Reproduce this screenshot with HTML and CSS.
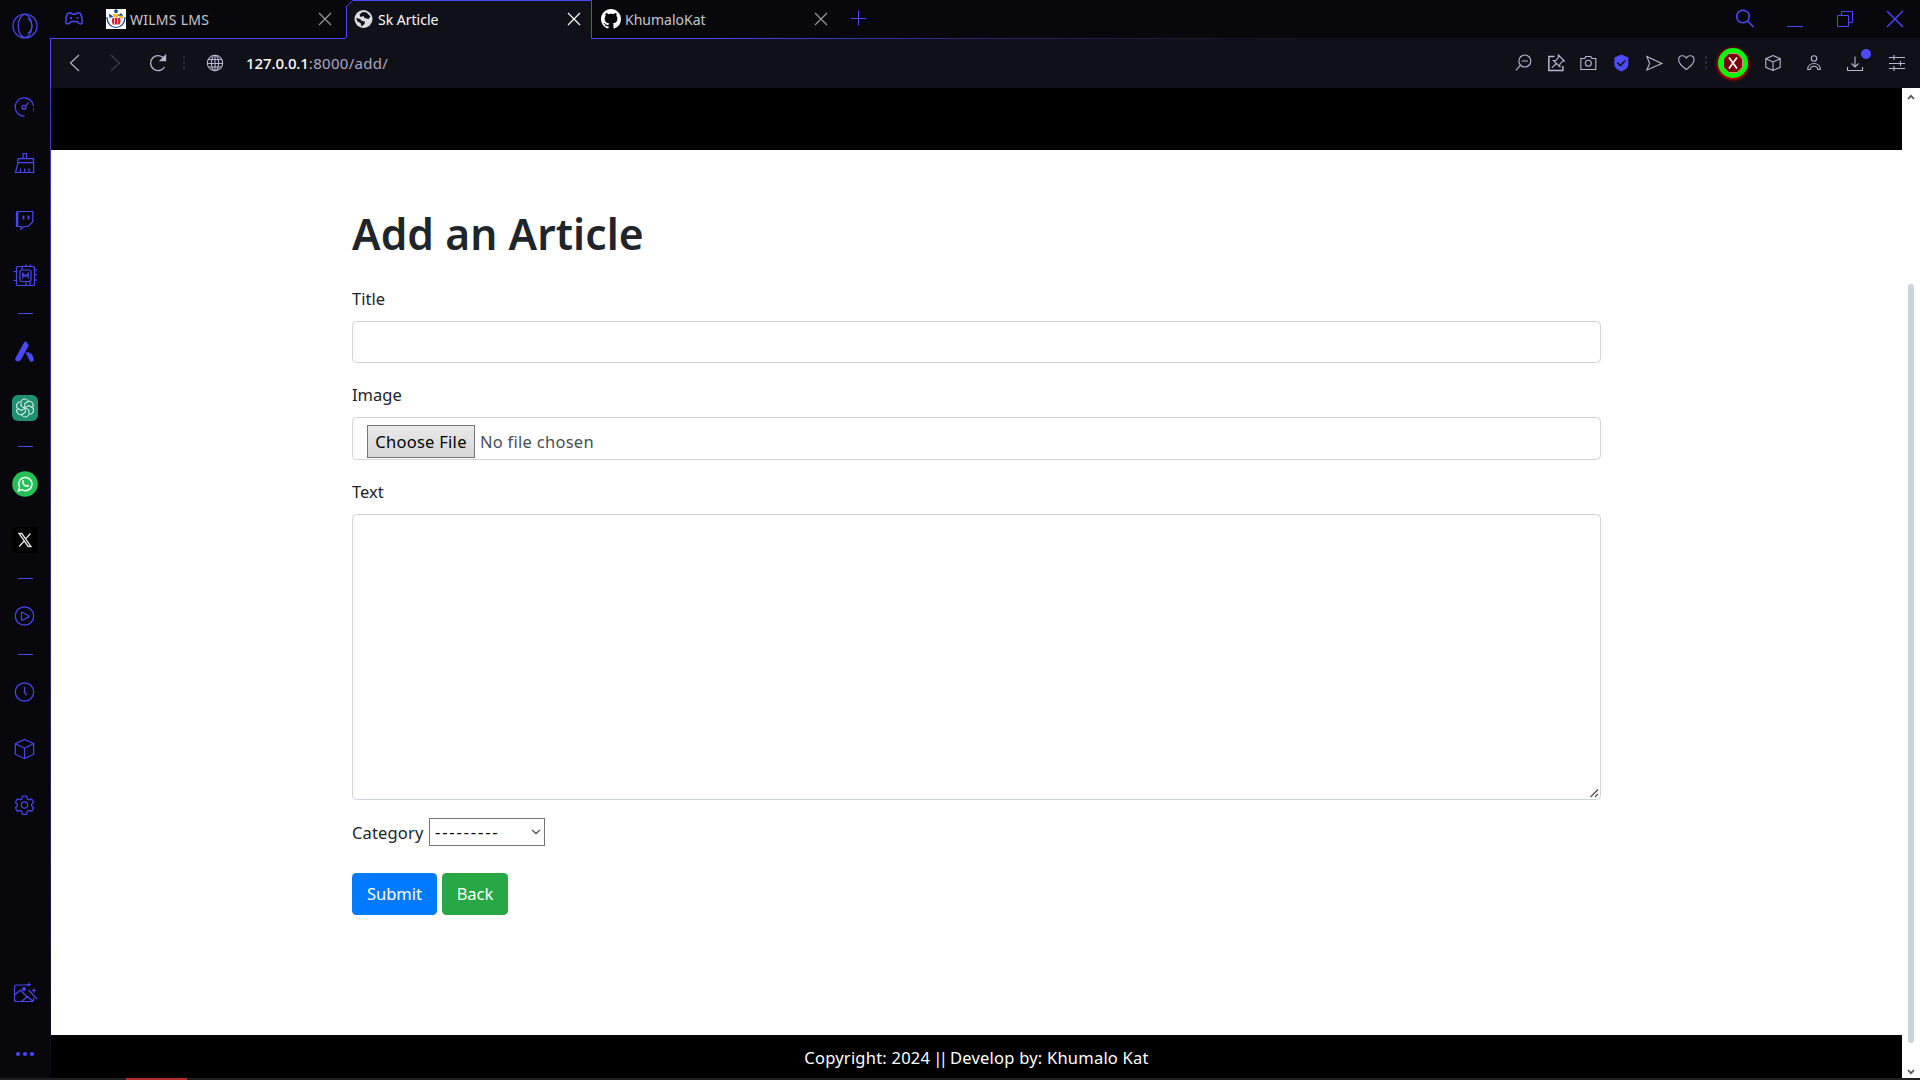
FILE: index.html
```html
<!DOCTYPE html>
<html lang="en">
<head>
<meta charset="utf-8">
<title>Sk Article</title>
<link rel="stylesheet" href="styles.css">
</head>
<body>
<div class="browser">
  <aside class="sidebar">
    <svg class="ico opera" viewBox="0 0 26 26"><circle cx="13" cy="13" r="12"/><ellipse cx="13" cy="13" rx="6.8" ry="11.5"/><path d="M15.5 5.8c6 2.500 6 12 0 14.400"/></svg>
    <svg class="ico speed" viewBox="0 0 26 26"><path d="M12.500 22.200A9.200 9.200 0 1 1 21.500 12"/><path d="M21.500 14v4" stroke-dasharray="1.200 1.200"/><circle cx="12" cy="13.300" r="2"/><path d="m13.500 11.800 3.200-3.200"/></svg>
    <svg class="ico" viewBox="0 0 26 26"><path d="M11 9V3.500h3.500V9M6 8.700h15.500v4H6zM6 12.700 3.500 22.500h18.200v-9.800M8 22.500l.8-4M12.700 22.500v-4M17 22.500v-4"/></svg>
    <svg class="ico" viewBox="0 0 26 26"><path d="M5 4.500h15.800v10.300L16 19.500h-4l-3 2.700v-2.700H4.500V6z"/><path d="M5.200 5v14" stroke-width="2.200"/><path d="M11.500 8.500v4M16.500 8.500v4" stroke-width="1.800"/></svg>
    <svg class="ico chip" viewBox="0 0 26 26"><rect x="4.500" y="3.500" width="18" height="19" rx="1"/><rect x="8" y="7" width="11" height="11.500" rx="2"/><path d="M10.800 15.500v-5l2.700 3 2.700-3v5" stroke-width="1.300"/><path d="M10 3.500V7M14 1.500v2M18.500 1.500v2M14 18.500v4M18 18.500v4M22.500 7h2.500M22.500 12h2.500M22.500 17h2.500M1.500 8.500h3M1.500 17.500h3"/></svg>
    <span class="dash after-chip"></span>
    <svg class="ico solid" viewBox="0 0 26 26"><path d="M12 3.500c1-1.300 2.300-1.200 3 0l1.700 3.300L9 20.800c-1.300 2-3.300 2-4.700 1.200-1.300-.7-1.500-1.600-.9-2.800zM13.500 13.500c5-1 7.500 2 8.300 7.300.2 1.600-1.600 2-3.500 1.900z"/></svg>
    <svg class="ico gpt" viewBox="0 0 26 26"><rect width="26" height="26" rx="6"/><path d="M12.700 13.200 9 11V7.500c0-4 6-4.700 7.300-1.300"/><path d="M12.700 13.200 9 11V7.500c0-4 6-4.700 7.300-1.300" transform="rotate(60 13 13)"/><path d="M12.700 13.200 9 11V7.500c0-4 6-4.700 7.300-1.300" transform="rotate(120 13 13)"/><path d="M12.700 13.200 9 11V7.500c0-4 6-4.700 7.300-1.300" transform="rotate(180 13 13)"/><path d="M12.700 13.200 9 11V7.500c0-4 6-4.700 7.300-1.300" transform="rotate(240 13 13)"/><path d="M12.700 13.200 9 11V7.500c0-4 6-4.700 7.300-1.300" transform="rotate(300 13 13)"/></svg>
    <span class="dash"></span>
    <svg class="ico whatsapp" viewBox="0 0 26 26"><circle class="disc" cx="13" cy="13" r="12.800"/><path d="m6.500 19.800 1-3.700a6.600 6.600 0 1 1 2.500 2.600z"/><path class="phone" d="M10.500 9.200c1-.6 1.300.2 1.700 1.600l-.7 1c.6 1.300 1.500 2 2.800 2.600l1-1c1.700.6 2.200.9 1.400 2-2.300 2.500-8.300-2.300-6.200-6.200z"/></svg>
    <svg class="ico xlogo" viewBox="0 0 26 26"><rect width="26" height="26" rx="5"/><path d="M7 6.500h2.800l9.200 13h-2.800zM18.500 6.500l-4.800 5.400M12 14.200l-4.800 5.300"/></svg>
    <span class="dash"></span>
    <svg class="ico" viewBox="0 0 26 26"><circle cx="12.500" cy="13" r="9.200"/><path d="M9.500 9.500v7.300l1 .3 6.500-3.300v-.8l-6.500-3.700z"/></svg>
    <span class="dash"></span>
    <svg class="ico" viewBox="0 0 26 26"><circle cx="12.500" cy="13" r="9.200"/><path d="M12.500 8v5.500l2.500 2.700"/></svg>
    <svg class="ico" viewBox="0 0 26 26"><path d="m12.500 3.500 9.200 4.200v10.500l-9.200 4.500-9.200-4.500V7.700zM3.300 7.700l9.200 4.500 9.200-4.500M12.500 12.200v10.500"/></svg>
    <svg class="ico" viewBox="0 0 26 26"><circle cx="12.500" cy="13" r="3.200"/><path d="M10.500 4h4l.8 2.800 1.700 1 2.700-.8 1.900 3.300-2 2v1.600l2 2-1.900 3.300-2.700-.8-1.700 1-.8 2.900h-4l-.8-2.900-1.700-1-2.700.8-1.900-3.300 2-2v-1.600l-2-2L5.300 7l2.700.8 1.700-1z"/></svg>
    <svg class="ico picture" viewBox="0 0 26 26"><path d="M16 5H4.500a2 2 0 0 0-2 2v12.500a2 2 0 0 0 2 2h15a2 2 0 0 0 2-2V18M2.500 15l6-5 7.500 8M10 21l5.500-4.500L20.500 21M16.500 10l8.500 9M15 4.500h4M17 2.500v4M20 10.500h4M22 8.500v4"/><circle cx="12" cy="9" r="1.300" fill="#4a48f5"/></svg>
    <svg class="ico solid more" viewBox="0 0 26 26"><circle cx="6" cy="13" r="2.100"/><circle cx="13" cy="13" r="2.100"/><circle cx="20" cy="13" r="2.100"/></svg>
  </aside>

  <div class="window">
    <header class="tabstrip">
      <svg class="gx" viewBox="0 0 20 16"><path d="M5 2h2l1.200 1.200h3.600L13 2h2c2 0 2.400 2 3 6 .5 3.500.3 5-1.500 5-1.300 0-2-.7-3.500-2.500H7C5.500 12.300 4.800 13 3.500 13 1.700 13 1.500 11.500 2 8c.6-4 1-6 3-6z"/><path d="M7 6v2M6 7h2M12.500 7h2"/></svg>
      <div class="tab first">
        <svg class="fav" viewBox="0 0 20 20"><path fill="#fff" d="M0 0h20v20H0z"/><path fill="none" stroke="#1a4a94" stroke-width="1.200" d="M1 8c0 14 18 14 18 0"/><path fill="#15498d" d="M8 1.500 10 0l2 1.500-.7 2.500H8.700zM3 4.500l4.500 3.300-4 1.200z"/><path fill="#efb730" d="m6.500 4.500 3.500.700 3.500-.700-1.500 4H8zM17 5.500l-5 3 5 1z"/><path fill="#15498d" d="m15 4-3 3 5-.500z"/><path fill="#cf2034" d="M6.500 9h7.500l.7 3-1 3.500h-7l-1-3.500z"/><path stroke="#fff" stroke-width=".7" d="M8.500 9v6.500M11.700 9v6.500"/></svg>
        <span class="tab-title wide">WILMS LMS</span>
        <svg class="x" viewBox="0 0 14 14"><path d="m1 1 12 12M13 1 1 13"/></svg>
      </div>
      <div class="tab active">
        <svg class="outline" viewBox="-1 0 247 39"><path class="face" d="M-1 39 .5 37V6.500L7 .5h238.500V39z"/><path class="edge" d="M-1 38.500.5 37V6.500L7 .5h238.500v38"/></svg>
        <svg class="fav" viewBox="0 0 20 20"><circle cx="9.500" cy="10" r="9" fill="#dedee2"/><path fill="#101018" d="M5.500 5.500 8.500 3l4 .5 4 4-2 2.500-4-1-1-2-3 1zM2 9l4 1 2 2 3 .5-.5 2.500-3 2.500-1-3.500-3-1.500z"/></svg>
        <span class="tab-title">Sk Article</span>
        <svg class="x" viewBox="0 0 14 14"><path d="m1 1 12 12M13 1 1 13"/></svg>
      </div>
      <div class="tab third">
        <svg class="fav" viewBox="0 0 16 16"><path fill="#fff" d="M8 0C3.580 0 0 3.580 0 8c0 3.540 2.290 6.530 5.470 7.590.4.070.550-.170.550-.380 0-.190-.010-.820-.010-1.490-2.010.370-2.530-.490-2.690-.940-.090-.230-.480-.940-.820-1.130-.280-.150-.680-.520-.010-.530.630-.010 1.080.580 1.230.820.720 1.210 1.870.870 2.330.660.070-.520.280-.870.510-1.070-1.780-.200-3.640-.890-3.640-3.950 0-.870.310-1.590.820-2.150-.080-.200-.360-1.020.080-2.120 0 0 .670-.210 2.200.820.640-.180 1.320-.270 2-.270s1.360.090 2 .270c1.530-1.040 2.200-.820 2.200-.820.440 1.100.160 1.920.080 2.120.510.560.820 1.270.820 2.150 0 3.070-1.870 3.750-3.650 3.950.290.250.540.730.540 1.480 0 1.070-.010 1.930-.010 2.200 0 .210.150.460.550.380A8.010 8.010 0 0 0 16 8c0-4.420-3.580-8-8-8z"/></svg>
        <span class="tab-title">KhumaloKat</span>
        <svg class="x" viewBox="0 0 14 14"><path d="m1 1 12 12M13 1 1 13"/></svg>
      </div>
      <svg class="plus" viewBox="0 0 16 16"><path d="M7.500 .500v15M0 8.500h15"/></svg>
      <div class="controls">
        <svg viewBox="0 0 20 20"><circle cx="8" cy="7.500" r="6.300"/><path d="m12.500 12 6 6"/></svg>
        <svg viewBox="0 0 20 20"><path d="M2 17.500h16"/></svg>
        <svg viewBox="0 0 20 20"><path d="M2.500 6.500h11v11h-11zM6.500 6.500v-4h11v11h-4"/></svg>
        <svg viewBox="0 0 20 20"><path d="m2 2 16 16M18 2 2 18" stroke-width="1.400"/></svg>
      </div>
    </header>

    <nav class="toolbar">
      <svg class="tb back" viewBox="0 0 20 20"><path d="m14 2-8.500 8 8.500 8"/></svg>
      <svg class="tb fwd" viewBox="0 0 20 20"><path d="m6 2 8.500 8-8.500 8"/></svg>
      <svg class="tb reload" viewBox="0 0 20 20"><path d="M16.500 14A7.500 7.500 0 1 1 16 5.500" /><path d="M17.500 2.500v5h-5z" fill="#b9b6d3"/></svg>
      <i class="sep"></i>
      <svg class="tb globe" viewBox="0 0 20 20"><circle cx="10" cy="10" r="7.700"/><ellipse cx="10" cy="10" rx="3.600" ry="7.700"/><path d="M10 2.300v15.400M3.500 6.500h13M2.300 10.500h15.400M4 14h12"/></svg>
      <div class="url"><b>127.0.0.1</b><span>:8000/add/</span></div>
      <div class="actions">
        <svg class="tb" viewBox="0 0 20 20"><circle cx="11.500" cy="8" r="6"/><path d="m7 12.300-4.500 5M8.500 8h6"/></svg>
        <svg class="tb" viewBox="0 0 20 20"><path d="M8 3.500H2.500v14h14V13" stroke-width="1.500"/><path d="m12 2 6 6-2 .5-2.500 2.700v2.500L7 7.500h2.500L12 4.500zM10 10.500l-4.500 4.300"/></svg>
        <svg class="tb" viewBox="0 0 20 20"><path d="M2.500 5.500h4l1-2h5l1 2h4v11h-15z"/><circle cx="10" cy="10.300" r="3"/></svg>
        <svg class="tb" viewBox="0 0 20 20"><path d="m10 1.500 7 3v7c0 3.500-3.500 5.500-7 7-3.500-1.500-7-3.500-7-7v-7z" fill="#4d4bff" stroke="none"/><path d="m6 9.500 3 3L14 7.500" stroke="#101018" stroke-width="1.600"/></svg>
        <svg class="tb" viewBox="0 0 20 20"><path d="m2.500 3.500 15 7-15 6.500 2.800-6.500z"/></svg>
        <svg class="tb" viewBox="0 0 20 20"><path d="M10 16.500C5 13 2.300 10.500 2.300 6.500c0-4.500 6-5 7.700-1.500 1.700-3.500 7.700-3 7.700 1.500 0 4-2.700 6.500-7.700 10z"/></svg>
      </div>
      <i class="sep right"></i>
      <div class="extension"><svg viewBox="0 0 20 20"><path fill="#7d0006" stroke="#e8b0a8" stroke-width=".8" d="M6 .5h8L19.500 6v8L14 19.500H6L.5 14V6z"/><path stroke="#fff" stroke-width="1.700" d="m6 4.500 8 11M14 4.500l-8 11"/></svg></div>
      <div class="slot cube"><svg class="tb" viewBox="0 0 20 20"><path d="m10 2.500 7.200 3.200v8.600L10 17.500l-7.200-3.200V5.700zM2.800 5.700 10 9l7.200-3.300M10 9v8.500"/></svg></div>
      <div class="slot person"><svg class="tb" viewBox="0 0 20 20"><circle cx="10" cy="5.500" r="2.700"/><path d="M3.700 16.500C4 8.500 16 8.500 16.300 16.500h-2.500c-.5-4.300-7.100-4.300-7.600 0z"/></svg></div>
      <div class="slot download"><svg class="tb" viewBox="0 0 20 20"><path d="M10 3.500v10M6.500 10.500 10 14l3.500-3.500M2.500 14v3.500h15V14"/></svg><i class="badge"></i></div>
      <div class="slot tune"><svg class="tb" viewBox="0 0 20 20"><path d="M2 4.500h16M2 10.500h16M2 15.500h16M7 2v5M13.500 8v5M7 13v5"/></svg></div>
    </nav>

    <div class="viewport">
      <main class="page">
        <div class="masthead"></div>
        <form class="article-form">
          <h1>Add an Article</h1>
          <label>Title</label>
          <input class="control" type="text">
          <label>Image</label>
          <div class="control file"><button type="button">Choose File</button><span class="file-name">No file chosen</span></div>
          <label>Text</label>
          <div class="area"><textarea class="control"></textarea><svg class="grip" viewBox="0 0 9 9"><path d="M.5 8 8 .5M5 8l3-3"/></svg></div>
          <div class="category"><span class="caption">Category</span><div class="select"><span class="opt">---------</span><svg viewBox="0 0 10 6"><path d="m1 1 4 3.500L9 1"/></svg></div></div>
          <div class="buttons"><button class="btn submit" type="button">Submit</button><button class="btn return" type="button">Back</button></div>
        </form>
        <footer>Copyright: 2024 <span class="bars">||</span> Develop by: Khumalo Kat</footer>
      </main>
      <div class="scrollbar">
        <svg viewBox="0 0 8 6"><path d="m1 5 3-3.200L7 5"/></svg>
        <i class="thumb"></i>
        <svg viewBox="0 0 8 6"><path d="m1 1 3 3.200L7 1"/></svg>
      </div>
    </div>
  </div>
</div>
<div class="taskbar"><i></i></div>
</body>
</html>
```
FILE: styles.css
```css
* { box-sizing: border-box; }
body { margin: 0; width: 1920px; height: 1080px; overflow: hidden; background: #08070c; font-family: "Noto Sans", "Open Sans", sans-serif; }
svg { display: block; fill: none; flex: none; }
i { display: block; }

.browser { display: flex; height: 1078px; }

/* Sidebar */
.sidebar { width: 50px; flex: none; display: flex; flex-direction: column; align-items: center; padding: 12.500px 0 11px; background: #08070c; }
.ico { width: 26px; height: 26px; flex: none; stroke: #4a48f5; stroke-width: 1.2; margin-bottom: 30.500px; }
.ico.opera { margin-bottom: 55px; }
.ico.chip { margin-bottom: 23.500px; }
.ico.solid { fill: #4a48f5; stroke: none; }
.dash { width: 15px; height: 1px; flex: none; background: #4a48f5; margin: -5.800px 0 24.200px; }
.dash.after-chip { margin: 0 0 25px; }
.gpt rect { fill: #1f9070; stroke: none; }
.gpt path { stroke: #e3f4ee; stroke-width: 1; }
.whatsapp .disc { fill: #25bf58; stroke: none; }
.whatsapp path { stroke: #f0fff4; stroke-width: 1.5; }
.whatsapp .phone { fill: #f0fff4; stroke: none; }
.xlogo rect { fill: #000; stroke: none; }
.xlogo path { stroke: #e4e4e4; stroke-width: 1.3; }
.ico.picture { margin-top: auto; margin-bottom: 35px; }
.ico.more { margin-bottom: 0; }

/* Tabs */
.window { flex: 1; display: flex; flex-direction: column; min-width: 0; }
.tabstrip { height: 39px; flex: none; display: flex; align-items: center; padding-bottom: 1px; background: linear-gradient(90deg, #4b49ff 0, #4b49ff 640px, #242265 960px, #111019 1250px) bottom / 100% 1px no-repeat, #08070c; }
.gx { width: 20px; height: 16px; margin-left: 14px; stroke: #4a48f5; stroke-width: 1.500; }
.tab { display: flex; align-items: center; height: 38px; position: relative; font-size: 14px; color: #c6c6ca; }
.tab.first { width: 240px; margin-left: 22px; }
.tab.active { width: 246px; padding-left: 8px; color: #fff; }
.tab.third { width: 245px; padding-left: 9px; }
.outline { position: absolute; left: -1px; top: 0; width: 247px; height: 39px; }
.outline .face { fill: #101018; }
.outline .edge { stroke: #4b49ff; }
.fav { width: 20px; height: 20px; position: relative; }
.tab-title { margin-left: 4px; position: relative; white-space: nowrap; }
.tab-title.wide { letter-spacing: .25px; }
.x { width: 14px; height: 14px; margin-left: auto; margin-right: 14px; stroke: #98989c; stroke-width: 1.2; position: relative; }
.active .x { stroke: #fff; margin-right: 11px; }
.third .x { margin-right: 9px; }
.plus { width: 16px; height: 16px; margin-left: 14px; margin-bottom: 3px; stroke: #4b49ff; }
.controls { margin-left: auto; display: flex; }
.controls svg { width: 50px; height: 20px; stroke: #4b49ff; stroke-width: 1; }
.controls svg:first-child { stroke-width: 1.600; }

/* Address bar */
.toolbar { height: 49px; flex: none; display: flex; align-items: center; padding-bottom: 2px; border-left: 1px solid #4b49ff; background: #101018; }
.tb { width: 20px; height: 20px; stroke: #b9b6d3; stroke-width: 1.100; }
.back { margin-left: 14px; }
.fwd { margin-left: 20px; stroke: #42414d; }
.reload { margin-left: 23px; stroke-width: 1.400; }
.sep { width: 2px; height: 13px; margin-left: 15px; background: repeating-linear-gradient(#29283e 0 3px, transparent 3px 5px); }
.globe { margin-left: 20px; }
.url { margin-left: 21px; font-size: 15px; color: #aaa7c4; display: flex; }
.url b { color: #fff; font-weight: 500; letter-spacing: -.1px; }
.url span { letter-spacing: .3px; }
.actions { margin-left: auto; display: flex; }
.actions .tb { width: 32.700px; }
.sep.right { margin-left: 2px; }
.extension { width: 30px; height: 30px; margin: 0 7px 0 11px; border: 5px solid #00fa00; border-radius: 50%; background: #7d0006; box-shadow: 0 1px 3px 1px #d80000; display: grid; place-items: center; }
.extension svg { width: 20px; height: 20px; }
.slot { display: flex; justify-content: center; position: relative; }
.cube { width: 35px; }
.person { width: 48px; }
.download { width: 34px; }
.tune { width: 48px; padding-left: 2px; }
.badge { position: absolute; width: 10px; height: 10px; border-radius: 50%; background: #4d4bff; left: 23px; top: -4px; }

/* Page */
.viewport { flex: 1; display: flex; padding-left: 1px; background: linear-gradient(#3e3ccd, #24235f 75%, #0b0a14) left / 1px 100% no-repeat, #fff; min-height: 0; }
.page { flex: 1; display: flex; flex-direction: column; }
.masthead { height: 62px; flex: none; background: #000; }
.article-form { flex: 1; width: 1249px; margin-left: 301px; padding-top: 57px; color: #212529; font-size: 16.500px; }
h1 { margin: 0 0 26px; font-size: 42.500px; line-height: 53px; font-weight: 600; letter-spacing: .1px; }
label { display: block; height: 26px; line-height: 26px; margin-bottom: 9px; }
.control { display: block; width: 100%; height: 42px; margin: 0 0 19px; border: 1px solid #ced4da; border-radius: 4.400px; background: #fff; outline: none; }
.file { height: 43px; display: flex; align-items: flex-start; padding: 7px 14px; color: #495057; letter-spacing: .27px; }
.file button { width: 108px; height: 33px; padding: 0; border: 1px solid #767676; background: linear-gradient(#e9e9e9, #d6d6d6); font: inherit; letter-spacing: .27px; color: #000; line-height: 31px; }
.file-name { margin-left: 5px; line-height: 33px; }
.area { position: relative; }
textarea.control { height: 286px; resize: none; margin-bottom: 18px; }
.grip { position: absolute; right: 2px; bottom: 2px; width: 9px; height: 9px; stroke: #4f4f4f; stroke-width: 1.300; }
.category { display: flex; align-items: center; height: 28px; }
.caption { width: 72px; letter-spacing: .15px; }
.select { display: flex; align-items: center; justify-content: space-between; width: 116px; height: 28px; margin-left: 5px; padding: 0 3px 0 5px; border: 1px solid #767676; color: #000; }
.opt { letter-spacing: 1.850px; line-height: 24px; }
.select svg { width: 10px; height: 6px; stroke: #5c5c5c; stroke-width: 1.500; }
.buttons { display: flex; gap: 5px; margin-top: 27px; }
.btn { height: 42px; padding: 0 0 2px; border: 0; border-radius: 4.400px; color: #fff; font: inherit; }
.submit { width: 85px; background: #007bff; }
.return { width: 66px; background: #28a745; }
footer { height: 43px; flex: none; background: #000; color: #fff; text-align: center; line-height: 45px; font-size: 16.500px; letter-spacing: .22px; }
.bars { letter-spacing: -3.400px; margin: 0 1px 0 -1.500px; }
.scrollbar { width: 18px; flex: none; display: flex; flex-direction: column; align-items: center; padding: 6px 0 3px; background: #fff; }
.scrollbar svg { width: 8px; height: 6px; stroke: #555; stroke-width: 1.800; }
.thumb { width: 6px; height: 759px; margin: 184px 0 auto; border-radius: 3px; background: #c9d5dc; }

.taskbar { height: 2px; background: #221f22; }
.taskbar i { width: 61px; height: 2px; margin-left: 126px; background: #b92b32; }
```
